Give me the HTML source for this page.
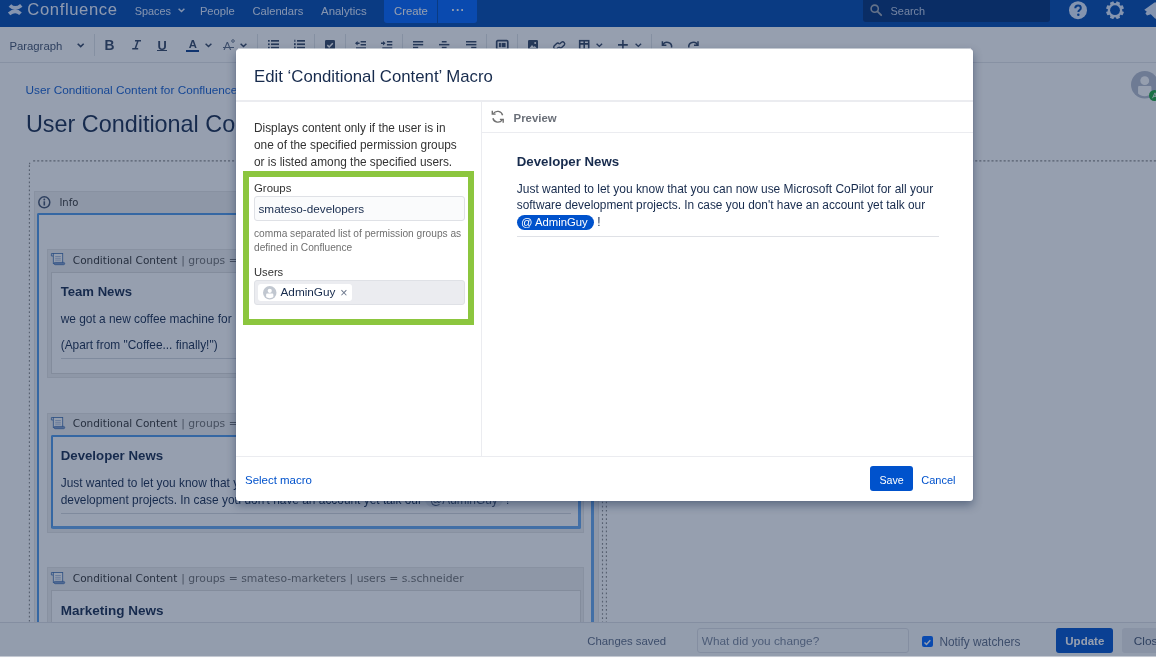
<!DOCTYPE html>
<html lang="en">
<head>
<meta charset="utf-8">
<title>Edit - User Conditional Content - Confluence</title>
<style>
*{box-sizing:border-box;margin:0;padding:0}
html,body{width:1156px;height:658px;overflow:hidden;background:#fff}
body{position:relative;font-family:"Liberation Sans",Arial,sans-serif;font-size:11.9px;color:#172b4d;-webkit-font-smoothing:antialiased}
.abs{position:absolute}
.t{position:absolute;white-space:pre;line-height:16px}
svg{position:absolute;overflow:visible}
/* ---------- header ---------- */
#page,#dlg{will-change:transform}
#hdr{position:absolute;left:0;top:0;width:1156px;height:27px;background:#0049b0}
#hdr .t{color:#deebff;font-size:11.2px;top:3px}
#logo-t{font-size:16.6px !important;letter-spacing:.64px;top:-.5px !important;left:27.3px;line-height:20px !important;color:#eef4ff !important}
#create{position:absolute;left:384px;top:-3px;width:53px;height:25.5px;background:#0065ff;border-radius:3px 0 0 3px}
#more{position:absolute;left:438px;top:-3px;width:38.5px;height:25.5px;background:#0065ff;border-radius:0 3px 3px 0}
#search{position:absolute;left:863px;top:-3px;width:186.8px;height:25.3px;background:#013078;border-radius:3px}
/* ---------- toolbar ---------- */
#tb{position:absolute;left:0;top:27px;width:1156px;height:35.5px;background:#fff;border-bottom:1px solid #e3e5ea}
#tb .sep{position:absolute;top:7px;width:1px;height:21.5px;background:#e1e3e8}
/* ---------- content ---------- */
#bc{left:25.5px;top:81.5px;font-size:11.8px;color:#1760d0}
#ttl{left:25.9px;top:108px;font-size:23.4px;line-height:32px;color:#172b4d}
.cell{position:absolute;border:1px dotted #7a7a7a;border-radius:4px 0 0 0}
.wrap{position:absolute;background:#f0f0f0;border:1px solid #e6e6e6}
.body{position:absolute;background:#fff;border:1px solid #ddd}
.body.sel{border-style:solid;border-width:2px 3px 3px 2px;border-color:#4f9aea #66a8ee #66a8ee #4f9aea;border-radius:2px}
.mh{font-family:"DejaVu Sans",Verdana,sans-serif;font-size:10.5px;color:#333;line-height:14px}
.mh i{font-style:normal;color:#707070;font-size:10.8px;margin-left:.4px}
.h2{font-weight:700;font-size:13.25px;color:#172b4d;line-height:18px}
.p{font-size:11.9px;line-height:17.2px;color:#172b4d}
.hr{position:absolute;height:1px;background:#d6d9df}
/* ---------- savebar ---------- */
#sb{position:absolute;left:0;top:622px;width:1156px;height:36px;background:#fafbfc;border-top:1px solid #dfe1e6}
/* ---------- blanket ---------- */
#blanket{position:absolute;left:0;top:0;width:1156px;height:656px;background:rgba(23,43,77,.45)}
#strip1{position:absolute;left:0;top:656px;width:1156px;height:1px;background:#c4c9d2}
#strip2{position:absolute;left:0;top:657px;width:1156px;height:1px;background:#fdfdfe}
/* ---------- dialog ---------- */
#dlg{position:absolute;left:236px;top:48px;width:737.3px;height:453px}
#dbg{position:absolute;left:0;top:1px;width:737.3px;height:452px;background:#fff;border-radius:3px;box-shadow:0 4px 10px rgba(9,30,66,.42),0 0 1px rgba(9,30,66,.3)}
#dlg .half{position:absolute;left:2px;width:733.3px;height:1px;background:rgba(255,255,255,.5)}
#dlg .line{position:absolute;background:#ebecf0}
</style>
</head>
<body>
<div id="page">
  <!-- header -->
  <div id="hdr">
    <svg id="logo" style="left:0;top:0" width="30" height="20" viewBox="0 0 30 20" fill="none" stroke="#deebff" stroke-width="3.700"><path d="M9.900 5.500Q15 10.600 21.300 5.300"/><path d="M20.500 13.700Q15.400 8.600 9.100 13.900"/></svg>
    <span class="t" id="logo-t">Confluence</span>
    <span class="t" style="left:134.7px;font-size:10.9px">Spaces</span>
    <svg style="left:177.6px;top:8.2px" width="7" height="4.4" viewBox="0 0 7 4.4"><path d="M0.6 0.7 3.5 3.5 6.400 0.7" fill="none" stroke="#deebff" stroke-width="1.500"/></svg>
    <span class="t" style="left:199.900px">People</span>
    <span class="t" style="left:252.400px">Calendars</span>
    <span class="t" style="left:321.100px;font-size:11.4px">Analytics</span>
    <div id="create"></div><div id="more"></div>
    <span class="t" style="left:394px;color:#fff;font-size:11.3px">Create</span>
    <span class="t" style="left:451.300px;color:#fff;font-size:12px;letter-spacing:.6px;top:2.400px;font-weight:700">···</span>
    <div id="search"></div>
    <svg style="left:870px;top:4.2px" width="12" height="12" viewBox="0 0 12 12"><circle cx="4.700" cy="4.700" r="3.600" fill="none" stroke="#a5adba" stroke-width="1.600"/><path d="M7.400 7.400 11.200 11.200" stroke="#a5adba" stroke-width="1.800" stroke-linecap="round"/></svg>
    <span class="t" style="left:890.600px;font-size:10.9px;color:#c1cfe8">Search</span>
    <svg id="help" style="left:1069px;top:1px" width="18" height="18.400" viewBox="0 0 18 18"><circle cx="9" cy="9" r="9" fill="#deebff"/><path d="M6.300 7c0-1.500 1.200-2.600 2.800-2.600s2.700 1 2.700 2.400c0 1.100-.6 1.700-1.400 2.200-.7.500-1 .800-1 1.500v.3" fill="none" stroke="#0049b0" stroke-width="2"/><circle cx="9.300" cy="13.500" r="1.250" fill="#0049b0"/></svg>
    <svg id="gear" style="left:1106.300px;top:1px" width="18" height="18.400" viewBox="-9 -9 18 18"><g fill="#deebff"><circle r="7.200"/><g id="teeth" transform="rotate(22.500)"><rect x="-1.900" y="-9" width="3.800" height="18" rx=".6"/><rect x="-1.900" y="-9" width="3.800" height="18" rx=".6" transform="rotate(45)"/><rect x="-1.900" y="-9" width="3.800" height="18" rx=".6" transform="rotate(90)"/><rect x="-1.900" y="-9" width="3.800" height="18" rx=".6" transform="rotate(135)"/></g></g><circle r="4.900" fill="#0049b0"/></svg>
    <svg id="bell" style="left:1143.500px;top:1px" width="14" height="18.400" viewBox="0 0 14 18"><path d="M0.300 8.500 10.500 1.200 14 1v17l-3-.6-4.200-4.300-3.800 1.300-1.600-2.400 1.400-1.500z" fill="#deebff"/></svg>
  </div>

  <!-- toolbar -->
  <div id="tb">
    <span class="t" style="left:9.400px;top:11.500px;font-size:11.33px;color:#42526e;line-height:14px">Paragraph</span>
    <svg style="left:77px;top:15.600px" width="7.400" height="4.800" viewBox="0 0 7.400 4.800"><path d="M0.700 0.800 3.700 3.700 6.700 0.800" fill="none" stroke="#344563" stroke-width="1.600"/></svg>
    <div class="sep" style="left:94px"></div>
    <span class="t" style="left:104.400px;top:11.300px;font-size:13.800px;font-weight:700;color:#344563;line-height:16px">B</span>
    <svg style="left:131.500px;top:13.300px" width="9.200" height="9.400" viewBox="0 0 9.200 9.400" fill="none" stroke="#344563" stroke-width="1.500"><path d="M3 .75h6M0.200 8.650h6M6 .75 3.200 8.650"/></svg>
    <span class="t" style="left:157.400px;top:10.600px;font-size:12.800px;font-weight:700;color:#344563;line-height:16px">U</span>
    <div class="abs" style="left:157.400px;top:22.600px;width:10px;height:1.200px;background:#344563"></div>
    <span class="t" style="left:188.800px;top:8.900px;font-size:11.300px;font-weight:700;color:#344563;line-height:16px">A</span>
    <div class="abs" style="left:186.300px;top:22.500px;width:12.800px;height:2px;background:#0c3d8a"></div>
    <svg style="left:204.700px;top:16px" width="7" height="4.400" viewBox="0 0 7 4.400"><path d="M0.600 0.700 3.500 3.500 6.400 0.700" fill="none" stroke="#344563" stroke-width="1.500"/></svg>
    <span class="t" style="left:223.600px;top:10.700px;font-size:11.500px;color:#5e6c84;line-height:16px">A</span>
    <div class="abs" style="left:222.600px;top:20px;width:11.800px;height:1px;background:#5e6c84"></div>
    <svg style="left:231px;top:12px" width="4" height="4" viewBox="0 0 4 4"><circle cx="2" cy="2" r="1.300" fill="none" stroke="#5e6c84" stroke-width=".9"/></svg>
    <svg style="left:240.200px;top:16px" width="7" height="4.400" viewBox="0 0 7 4.400"><path d="M0.600 0.700 3.500 3.500 6.400 0.700" fill="none" stroke="#344563" stroke-width="1.500"/></svg>
    <div class="sep" style="left:257px"></div>
    <!-- bullet list -->
    <svg style="left:267.500px;top:13.200px" width="11" height="9" viewBox="0 0 11 9" fill="#344563"><rect x="0" y="0" width="1.700" height="1.700"/><rect x="3" y="0" width="8" height="1.700"/><rect x="0" y="3.400" width="1.700" height="1.700"/><rect x="3" y="3.400" width="8" height="1.700"/><rect x="0" y="6.800" width="1.700" height="1.700"/><rect x="3" y="6.800" width="8" height="1.700"/></svg>
    <svg style="left:293.800px;top:13.200px" width="11" height="9" viewBox="0 0 11 9" fill="#344563"><rect x="0.300" y="-.3" width="1.100" height="2.200"/><rect x="3" y="0" width="8" height="1.700"/><rect x="0" y="3.200" width="1.700" height="2"/><rect x="3" y="3.400" width="8" height="1.700"/><rect x="0" y="6.600" width="1.700" height="2"/><rect x="3" y="6.800" width="8" height="1.700"/></svg>
    <div class="sep" style="left:314px"></div>
    <svg style="left:325px;top:12.500px" width="10" height="10" viewBox="0 0 10 10"><rect width="10" height="10" rx="1.300" fill="#344563"/><path d="M2.300 5.100 4.200 7 7.800 3.200" fill="none" stroke="#fff" stroke-width="1.500"/></svg>
    <div class="sep" style="left:345px"></div>
    <!-- outdent / indent -->
    <svg style="left:355.300px;top:13.500px" width="11" height="9" viewBox="0 0 11 9" fill="#344563"><path d="M0 2.300 2.600 0v1.600h2v1.400h-2v1.600z"/><rect x="5.600" y="0" width="5.400" height="1.500"/><rect x="5.600" y="3" width="5.400" height="1.500"/><rect x="1" y="6.300" width="10" height="1.500"/></svg>
    <svg style="left:381.300px;top:13.500px" width="11.300" height="9" viewBox="0 0 11.300 9" fill="#344563"><path d="M4.600 2.300 2 0v1.600H0v1.400h2v1.600z"/><rect x="5.900" y="0" width="5.400" height="1.500"/><rect x="5.900" y="3" width="5.400" height="1.500"/><rect x="1.300" y="6.300" width="10" height="1.500"/></svg>
    <div class="sep" style="left:402px"></div>
    <!-- align -->
    <svg style="left:413.300px;top:13.800px" width="10.200" height="8" viewBox="0 0 10.200 8" fill="#344563"><rect width="10.200" height="1.500"/><rect y="2.900" width="10.200" height="1.500"/><rect y="5.800" width="5.200" height="1.500"/></svg>
    <svg style="left:439.300px;top:13.800px" width="10.400" height="8" viewBox="0 0 10.400 8" fill="#344563"><rect x="2.800" width="4.800" height="1.500"/><rect y="2.900" width="10.400" height="1.500"/><rect x="2.800" y="5.800" width="4.800" height="1.500"/></svg>
    <svg style="left:465.700px;top:13.800px" width="10.400" height="8" viewBox="0 0 10.400 8" fill="#344563"><rect width="10.400" height="1.500"/><rect y="2.900" width="10.400" height="1.500"/><rect x="5.200" y="5.800" width="5.200" height="1.500"/></svg>
    <div class="sep" style="left:486px"></div>
    <svg style="left:495.500px;top:13px" width="12.500" height="10" viewBox="0 0 12.500 10"><rect x=".7" y=".7" width="11.100" height="8.600" rx="1" fill="none" stroke="#344563" stroke-width="1.700"/><rect x="2.900" y="2.900" width="2" height="4.300" fill="#344563"/><rect x="5.600" y="2.900" width="4" height="4.300" fill="#344563"/></svg>
    <div class="sep" style="left:517px"></div>
    <svg style="left:527.700px;top:13px" width="10" height="10" viewBox="0 0 10 10"><rect width="10" height="10" rx="1.200" fill="#344563"/><path d="M1.500 8 4 5l1.800 2 1-1 1.700 2z" fill="#fff"/><circle cx="7.200" cy="3" r="1" fill="#fff"/></svg>
    <svg style="left:552.700px;top:12.500px" width="12.400" height="11" viewBox="0 0 12.400 11" fill="none" stroke="#344563" stroke-width="1.400" stroke-linecap="round"><path d="M5.300 7.400 3.900 8.800a2 2 0 0 1-2.800-2.800L3.400 3.700a2 2 0 0 1 2.800 0"/><path d="M7.100 3.600 8.500 2.200a2 2 0 0 1 2.800 2.800L9 7.300a2 2 0 0 1-2.800 0"/></svg>
    <svg style="left:578.600px;top:13px" width="10.400" height="10" viewBox="0 0 10.400 10" fill="none" stroke="#344563" stroke-width="1.600"><rect x=".7" y=".7" width="9" height="8.600"/><path d="M.7 3.900h9M5.200 .7v8.600"/></svg>
    <svg style="left:595.800px;top:16px" width="6.700" height="4.400" viewBox="0 0 6.700 4.400"><path d="M0.600 0.700 3.350 3.400 6.100 0.700" fill="none" stroke="#344563" stroke-width="1.400"/></svg>
    <svg style="left:618px;top:12.800px" width="9.800" height="9.800" viewBox="0 0 9.800 9.800" stroke="#344563" stroke-width="1.600"><path d="M4.900 0v9.800M0 4.900h9.800"/></svg>
    <svg style="left:634.700px;top:16px" width="6.700" height="4.400" viewBox="0 0 6.700 4.400"><path d="M0.600 0.700 3.350 3.400 6.100 0.700" fill="none" stroke="#344563" stroke-width="1.400"/></svg>
    <div class="sep" style="left:651px"></div>
    <svg style="left:660.600px;top:13.500px" width="11.400" height="9" viewBox="0 0 11.400 9" fill="none" stroke="#344563" stroke-width="1.500"><path d="M1.400 .3v4h4"/><path d="M1.800 4.100A4.600 4.600 0 0 1 10.600 6.500"/></svg>
    <svg style="left:687.600px;top:13.500px" width="11.400" height="9" viewBox="0 0 11.400 9" fill="none" stroke="#344563" stroke-width="1.500"><path d="M10 .3v4h-4"/><path d="M9.600 4.100A4.600 4.600 0 0 0 .8 6.500"/></svg>
  </div>

  <!-- CONTENT -->
  <div id="content">
    <span class="t" id="bc">User Conditional Content for Confluence</span>
    <span class="t" id="ttl">User Conditional Content</span>
    <!-- user avatar top right -->
    <svg style="left:1131px;top:71.300px" width="27.500" height="27.500" viewBox="0 0 28 28"><circle cx="14" cy="14" r="14" fill="#b7bece"/><circle cx="14" cy="9.800" r="4.500" fill="#fff"/><path d="M7.200 22.800v-6.200c0-.8.500-1.300 1.300-1.300h11c.8 0 1.300.5 1.300 1.300v6.200c-1.800 1.800-4.200 2.800-6.800 2.800s-5-1-6.800-2.800z" fill="#fff"/></svg>
    <div class="abs" style="left:1148.600px;top:89.700px;width:11px;height:11px;border-radius:50%;background:#1fa83e"></div>
    <svg style="left:1151.500px;top:92px" width="5" height="7" viewBox="0 0 5 7"><path d="M.5 6.200 3 .8 4.800 6.200M1.300 4.300h3" fill="none" stroke="#fff" stroke-width=".9"/></svg>

    <!-- layout cells -->
    <svg style="left:0;top:0" width="1156" height="658" viewBox="0 0 1156 658" fill="none" stroke="#8c8c8c" stroke-width="1.150" stroke-dasharray="2.100 1.960"><path d="M33.100 160.800H601"/><path d="M602.500 163V660" stroke-dasharray="1.700 2.430"/><path d="M29.400 165.200V660" stroke-dasharray="1.700 2.360"/><path d="M29.500 164.300a3.500 3.500 0 0 1 2.600-3.300" stroke-dasharray="1.600 3"/><path d="M1160 160.800H608"/><path d="M606.400 163V660" stroke-dasharray="1.700 2.430"/></svg>

    <!-- info macro -->
    <div class="wrap" style="left:33.500px;top:190.800px;width:565px;height:480px"></div>
    <svg style="left:38.200px;top:196px" width="12.600" height="12.600" viewBox="0 0 12.600 12.600"><circle cx="6.300" cy="6.300" r="5.500" fill="none" stroke="#42526e" stroke-width="1.500"/><rect x="5.500" y="5.300" width="1.600" height="4.200" fill="#42526e"/><circle cx="6.300" cy="3.500" r=".95" fill="#42526e"/></svg>
    <span class="t mh" style="left:59.400px;top:196.400px;font-size:10px">Info</span>
    <div class="body sel" style="left:37.400px;top:213.200px;width:556.600px;height:460px"></div>

    <!-- macro 1 -->
    <div class="wrap" style="left:46.500px;top:248.800px;width:537.500px;height:129.200px"></div>
    <svg class="mi" style="left:51px;top:253.400px" width="14" height="12" viewBox="0 0 14 12"><path d="M2.300 3H.400V.500H2.300" fill="#e8edf5" stroke="#4472b0" stroke-width=".8"/><rect x="2.300" y=".500" width="9.400" height="10" fill="#fafbfc" stroke="#4472b0" stroke-width=".85"/><rect x="3" y="9.400" width="10.700" height="2.300" rx="1.150" fill="#7c9bcb" stroke="#3f6cad" stroke-width=".7"/><path d="M4.200 3.500h5.600M4.200 5.300h5.600M4.200 7.100h5.600" stroke="#8fa8cf" stroke-width=".7"/></svg>
    <span class="t mh" style="left:72.800px;top:252.900px">Conditional Content<i> | groups = smateso-users</i></span>
    <div class="body" style="left:51px;top:271.500px;width:529.500px;height:102px"></div>
    <span class="t h2" style="left:60.700px;top:283.400px;font-size:13.130px">Team News</span>
    <span class="t p" style="left:60.700px;top:310.600px">we got a new coffee machine for  the office kitchen. Enjoy!</span>
    <span class="t p" style="left:60.700px;top:336.500px">(Apart from "Coffee... finally!")</span>
    <div class="hr" style="left:60.700px;top:358px;width:510.600px"></div>

    <!-- macro 2 -->
    <div class="wrap" style="left:46.500px;top:412.600px;width:537.500px;height:120px"></div>
    <svg class="mi" style="left:51px;top:417.200px" width="14" height="12" viewBox="0 0 14 12"><path d="M2.300 3H.400V.500H2.300" fill="#e8edf5" stroke="#4472b0" stroke-width=".8"/><rect x="2.300" y=".500" width="9.400" height="10" fill="#fafbfc" stroke="#4472b0" stroke-width=".85"/><rect x="3" y="9.400" width="10.700" height="2.300" rx="1.150" fill="#7c9bcb" stroke="#3f6cad" stroke-width=".7"/><path d="M4.200 3.500h5.600M4.200 5.300h5.600M4.200 7.100h5.600" stroke="#8fa8cf" stroke-width=".7"/></svg>
    <span class="t mh" style="left:72.800px;top:416.200px">Conditional Content<i> | groups = smateso-developers | users = AdminGuy</i></span>
    <div class="body sel" style="left:51px;top:435.200px;width:530px;height:94.100px"></div>
    <span class="t h2" style="left:60.700px;top:446.900px">Developer News</span>
    <span class="t p" style="left:60.700px;top:474.800px">Just wanted to let you know that you can now use Microsoft CoPilot for all your software</span>
    <span class="t p" style="left:60.700px;top:492.100px">development projects. In case you don't have an account yet talk our <span style="background:#ebedf1;border-radius:8px;padding:1px 5px .3px 5px;color:#42526e">@AdminGuy</span> !</span>
    <div class="hr" style="left:60.700px;top:513px;width:510.600px"></div>

    <!-- macro 3 -->
    <div class="wrap" style="left:46.500px;top:567.200px;width:537.500px;height:119.800px"></div>
    <svg class="mi" style="left:51px;top:571.800px" width="14" height="12" viewBox="0 0 14 12"><path d="M2.300 3H.400V.500H2.300" fill="#e8edf5" stroke="#4472b0" stroke-width=".8"/><rect x="2.300" y=".500" width="9.400" height="10" fill="#fafbfc" stroke="#4472b0" stroke-width=".85"/><rect x="3" y="9.400" width="10.700" height="2.300" rx="1.150" fill="#7c9bcb" stroke="#3f6cad" stroke-width=".7"/><path d="M4.200 3.500h5.600M4.200 5.300h5.600M4.200 7.100h5.600" stroke="#8fa8cf" stroke-width=".7"/></svg>
    <span class="t mh" style="left:72.800px;top:571.400px">Conditional Content<i> | groups = smateso-marketers | users = s.schneider</i></span>
    <div class="body" style="left:51px;top:590px;width:529.500px;height:93px"></div>
    <span class="t h2" style="left:60.700px;top:602.200px;font-size:13.500px">Marketing News</span>
  </div>

  <!-- savebar -->
  <div id="sb">
    <span class="t" style="left:587.300px;top:11.200px;font-size:11.350px;color:#5e6c84;line-height:14px">Changes saved</span>
    <div class="abs" style="left:697px;top:5px;width:212px;height:24.500px;border:1px solid #dfe1e6;border-radius:3px;background:#fafbfc"></div>
    <span class="t" style="left:701.800px;top:10.600px;font-size:11.800px;color:#7a869a;line-height:14px">What did you change?</span>
    <div class="abs" style="left:922px;top:13px;width:10.800px;height:11px;border-radius:2px;background:#0065ff"></div>
    <svg style="left:922px;top:13.500px" width="10.800" height="10.800" viewBox="0 0 10.800 10.800"><path d="M2.500 5.500 4.500 7.500 8.300 3.300" fill="none" stroke="#fff" stroke-width="1.500"/></svg>
    <span class="t" style="left:939.400px;top:11.800px;font-size:11.850px;color:#5e6c84;line-height:14px">Notify watchers</span>
    <div class="abs" style="left:1055.700px;top:4.500px;width:57.700px;height:25.300px;border-radius:3px;background:#0052cc"></div>
    <span class="t" style="left:1065.300px;top:10.700px;font-size:11.500px;color:#fff;font-weight:700;line-height:14px">Update</span>
    <div class="abs" style="left:1122px;top:4.500px;width:57.700px;height:25.300px;border-radius:3px;background:rgba(9,30,66,.08)"></div>
    <span class="t" style="left:1133.800px;top:11.400px;font-size:11.800px;color:#42526e;line-height:14px">Close</span>
  </div>
</div>

<div id="blanket"></div>
<div id="strip1"></div><div id="strip2"></div>

<!-- DIALOG -->
<div id="dlg">
  <div id="dbg"></div><div class="half" style="top:0"></div>
  <span class="t" style="left:18px;top:17.700px;font-size:16.770px;line-height:22px;color:#172b4d">Edit ‘Conditional Content’ Macro</span>
  <div class="line" style="left:0;top:52.3px;width:737.300px;height:1.400px"></div>
  <div class="line" style="left:245px;top:53.5px;width:1.200px;height:355px"></div>
  <div class="line" style="left:246px;top:83.8px;width:491.300px;height:1.200px"></div>
  <div class="line" style="left:0;top:407.5px;width:737.300px;height:1.200px"></div>

  <!-- left panel -->
  <span class="t p" style="left:18px;top:71.8px;color:#333;font-size:11.850px">Displays content only if the user is in
one of the specified permission groups
or is listed among the specified users.</span>
  <div class="abs" style="left:7.300px;top:123.3px;width:231px;height:153.700px;border:6px solid #8cc63e"></div>
  <span class="t" style="left:18px;top:131.9px;font-size:11.400px;color:#333">Groups</span>
  <div class="abs" style="left:17.500px;top:148px;width:211px;height:24.600px;border:1px solid #dfe1e6;border-radius:3px;background:#fafbfc"></div>
  <span class="t" style="left:22.500px;top:153.2px;font-size:11.740px;color:#172b4d">smateso-developers</span>
  <span class="t" style="left:18px;top:178.5px;font-size:10.170px;line-height:14.400px;color:#707070">comma separated list of permission groups as
defined in Confluence</span>
  <span class="t" style="left:18px;top:216.2px;font-size:11.200px;color:#333">Users</span>
  <div class="abs" style="left:17.500px;top:232.2px;width:211.300px;height:24.400px;border:1px solid #dfe1e6;border-radius:3px;background:#ebecf0"></div>
  <div class="abs" style="left:21.800px;top:236.2px;width:94px;height:16.400px;border-radius:3px;background:#fff"></div>
  <svg style="left:26.500px;top:238px" width="13.500" height="13.500" viewBox="0 0 28 28"><circle cx="14" cy="14" r="14" fill="#c1c7d0"/><circle cx="14" cy="10" r="4.300" fill="#fff"/><path d="M6.500 22.500v-4.300c0-1.400 1-2.400 2.400-2.400h10.200c1.400 0 2.400 1 2.400 2.400v4.300c-2 2-4.600 3-7.500 3s-5.500-1-7.500-3z" fill="#fff"/></svg>
  <span class="t" style="left:44.500px;top:236.4px;font-size:11.780px;color:#172b4d">AdminGuy</span>
  <span class="t" style="left:104.200px;top:236.700px;font-size:12.500px;color:#6b778c">×</span>

  <!-- preview -->
  <svg style="left:255.300px;top:62.3px" width="13.500" height="13.500" viewBox="0 0 13.500 13.500" fill="none" stroke="#707070" stroke-width="1.400"><path d="M11.600 5.200A5.200 5.200 0 0 0 2.300 3.600"/><path d="M1.900 8.300A5.200 5.200 0 0 0 11.200 9.900"/><path d="M1.300 .8v3.300h3.300M12.200 12.700V9.400H8.900" /></svg>
  <span class="t" style="left:277.600px;top:62px;font-size:11.370px;font-weight:700;color:#6a6f78">Preview</span>
  <span class="t h2" style="left:280.800px;top:104.9px">Developer News</span>
  <span class="t p" style="left:280.800px;top:132.8px;line-height:16.600px;font-size:11.970px">Just wanted to let you know that you can now use Microsoft CoPilot for all your
<span style="font-size:11.870px">software development projects. In case you don't have an account yet talk our</span></span>
  <div class="abs" style="left:280.500px;top:166.9px;width:77.600px;height:15.200px;border-radius:7.600px;background:#0052cc"></div>
  <span class="t" style="left:285px;top:166.3px;font-size:11.310px;color:#fff">@ AdminGuy</span>
  <span class="t p" style="left:361.300px;top:166px">!</span>
  <div class="hr" style="left:280.500px;top:188.2px;width:422px;background:#dfe1e6"></div>

  <!-- footer -->
  <span class="t" style="left:9px;top:423.8px;font-size:11.480px;color:#0052cc">Select macro</span>
  <div class="abs" style="left:633.800px;top:418px;width:42.900px;height:25.300px;border-radius:3px;background:#0052cc"></div>
  <span class="t" style="left:643.400px;top:423.8px;font-size:10.700px;color:#fff">Save</span>
  <span class="t" style="left:685.300px;top:423.8px;font-size:11px;color:#0052cc">Cancel</span>
</div>
</body>
</html>
